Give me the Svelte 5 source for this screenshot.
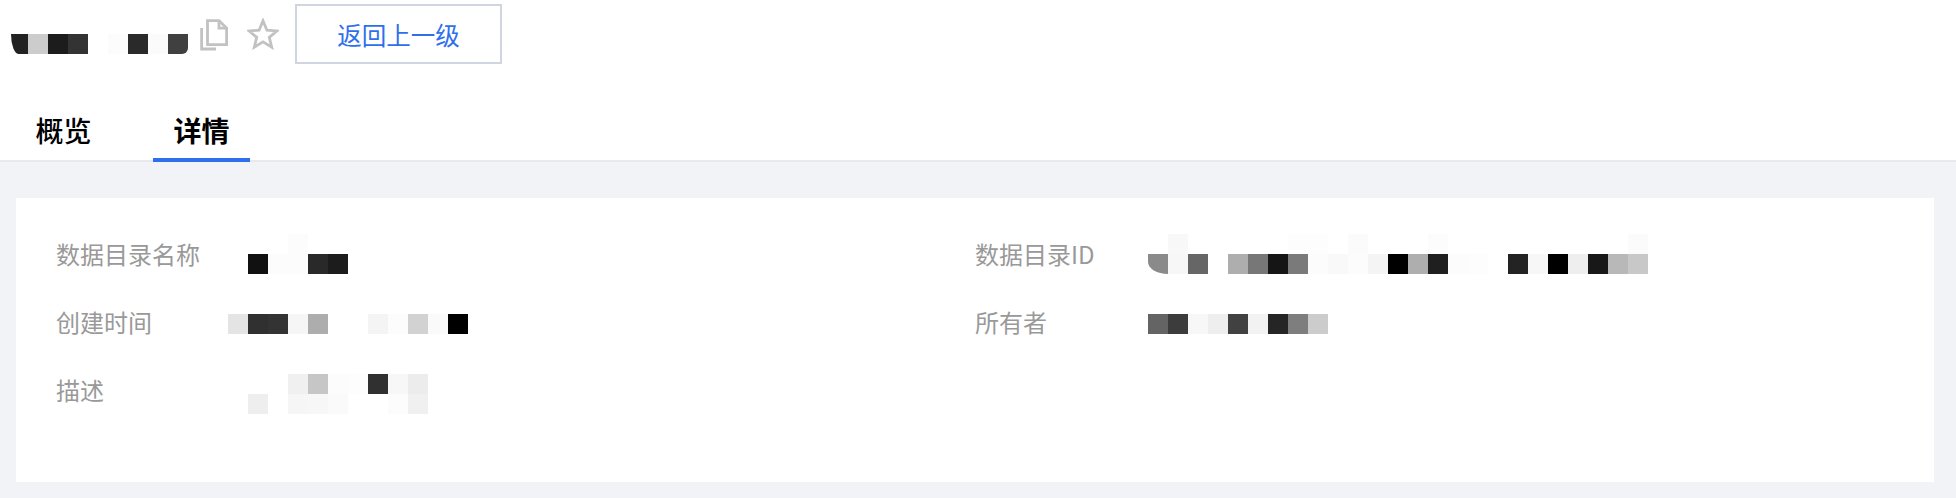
<script>
  // mosaic blocks stand in for the blurred values of the screenshot
  const title = ['#222', '#ccc', '#1c1c1c', '#333', '', '#fcfcfc', '#2a2a2a', '#fbfbfb', '#404040'];

  const rows = [
    [
      {
        label: '数据目录名称',
        top: 14,
        cells: [
          ['', '', '', '#fcfcfc'],
          ['', '#111', '#fcfcfc', '#fcfcfc', '#292929', '#1c1c1c']
        ]
      },
      {
        label: '数据目录ID',
        top: 14,
        round: true,
        cells: [
          ['', '#f8f8f8', '', '', '', '', '', '#fdfdfd', '#fdfdfd', '', '#fbfbfb', '', '', '', '#fcfcfc', '', '', '', '', '', '', '', '', '', '#fbfbfb'],
          ['#8a8a8a', '#f7f7f7', '#666', '', '#aeaeae', '#777', '#151515', '#7a7a7a', '#fcfcfc', '#f9f9f9', '#fcfcfc', '#f4f4f4', '#000', '#aeaeae', '#1f1f1f', '#fcfcfc', '#fdfdfd', '', '#232323', '#f7f7f7', '#000', '#eee', '#181818', '#b8b8b8', '#c8c8c8']
        ]
      }
    ],
    [
      {
        label: '创建时间',
        top: 26,
        cells: [['#e4e4e4', '#303030', '#333', '#f6f6f6', '#adadad', '', '', '#f4f4f4', '#fcfcfc', '#d2d2d2', '#fafafa', '#000']]
      },
      {
        label: '所有者',
        top: 26,
        cells: [['#646464', '#3c3c3c', '#f7f7f7', '#eee', '#414141', '#f2f2f2', '#252525', '#7e7e7e', '#ccc']]
      }
    ],
    [
      {
        label: '描述',
        top: 18,
        cells: [
          ['', '', '', '#f0f0f0', '#c6c6c6', '#fcfcfc', '#fdfdfd', '#303030', '#f7f7f7', '#ececec'],
          ['', '#eee', '', '#f6f6f6', '#f7f7f7', '#fafafa', '', '', '#fcfcfc', '#f0f0f0']
        ]
      }
    ]
  ];
</script>

<div class="page">
  <header class="header">
    <div class="title-row">
      <div class="title" aria-label="名称">
        {#each title as color}
          <span class="cell" style:background={color}></span>
        {/each}
      </div>
      <svg class="copy" width="28" height="32" viewBox="0 0 28 32" fill="none" stroke="#c2c2c2" stroke-width="2.8">
        <path d="M7.5 1.6H19L26.6 9.2V25.6H7.5Z" />
        <path d="M19 1.6V9.2H26.6" />
        <path d="M1.6 9V30H16" />
      </svg>
      <svg class="star" width="32" height="32" viewBox="0 0 32 32" fill="none" stroke="#c2c2c2" stroke-width="2.8" stroke-linejoin="miter">
        <path d="M16 2.8L19.9 12.2L30 12.9L22.3 19.3L24.7 29.2L16 23.9L7.3 29.2L9.7 19.3L2 12.9L12.1 12.2Z" />
      </svg>
      <button class="back" type="button">返回上一级</button>
    </div>
    <nav class="tabs">
      <span class="tab">概览</span>
      <span class="tab active">详情</span>
    </nav>
  </header>

  <main class="content">
    <section class="card">
      {#each rows as row}
        <div class="row">
          {#each row as item, col}
            <div class="item">
              <span class="label" class:wide={col === 1}>{item.label}</span>
              <div class="mosaic" style:margin-top="{item.top}px">
                {#each item.cells as line}
                  <div class="line" class:round={item.round}>
                    {#each line as color}
                      <span class="cell" style:background={color}></span>
                    {/each}
                  </div>
                {/each}
              </div>
            </div>
          {/each}
        </div>
      {/each}
    </section>
  </main>
</div>

<style>
  :global(body) {
    margin: 0;
    background: #f2f3f7;
  }

  .page {
    height: 498px;
    overflow: hidden;
    display: flex;
    flex-direction: column;
    font-family: "Noto Sans CJK SC", "Noto Sans", sans-serif;
  }

  .header {
    height: 160px;
    flex: none;
    background: #fff;
    border-bottom: 2px solid #e8e9ef;
  }

  .title-row {
    display: flex;
    align-items: flex-start;
    padding: 4px 0 0 11px;
  }

  .title {
    display: flex;
    margin-top: 30px;
  }

  .cell {
    display: block;
    width: 20px;
    height: 20px;
    flex: none;
  }

  .title .cell:first-child {
    width: 17px;
    border-bottom-left-radius: 8px 20px;
  }

  .title .cell:last-child {
    border-bottom-right-radius: 6px;
  }

  .copy {
    margin: 15px 0 0 12px;
  }

  .star {
    margin: 14px 0 0 19px;
  }

  .back {
    width: 207px;
    height: 60px;
    margin-left: 16px;
    padding: 0;
    box-sizing: border-box;
    background: #fff;
    border: 2px solid #d0d5e0;
    color: #2f6fed;
    font-family: inherit;
    font-size: 24.5px;
  }

  .tabs {
    display: flex;
    gap: 41px;
    margin-top: 48px;
    padding-left: 15px;
  }

  .tab {
    width: 97px;
    height: 50px;
    box-sizing: border-box;
    text-align: center;
    font-size: 28px;
    line-height: 36px;
    color: #000;
    font-weight: 500;
  }

  .tab.active {
    font-weight: 700;
    border-bottom: 4px solid #2f6fed;
  }

  .content {
    padding: 36px 22px 16px 16px;
  }

  .card {
    height: 284px;
    box-sizing: border-box;
    padding: 22px 0 0 40px;
    background: #fff;
  }

  .row {
    display: grid;
    grid-template-columns: 919px 1fr;
    height: 68px;
  }

  .item {
    display: flex;
    align-items: flex-start;
  }

  .label {
    width: 172px;
    flex: none;
    font-size: 24px;
    line-height: 68px;
    height: 68px;
    color: #999;
  }

  .label.wide {
    width: 173px;
  }

  .line {
    display: flex;
  }

  .line.round .cell:first-child {
    border-bottom-left-radius: 20px 12px;
  }
</style>
